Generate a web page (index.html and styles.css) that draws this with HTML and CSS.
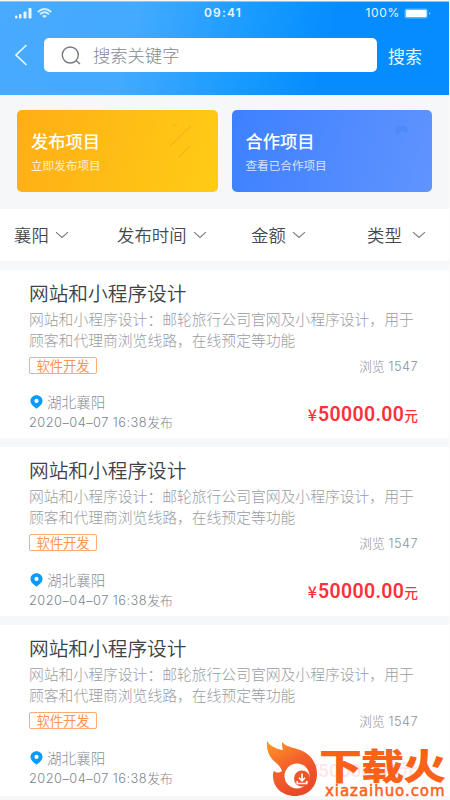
FILE: index.html
```
<!DOCTYPE html>
<html lang="zh-CN">
<head>
<meta charset="utf-8">
<title>项目列表</title>
<link rel="stylesheet" href="styles.css">
</head>
<body>
<svg width="0" height="0" class="defs">
  <symbol id="chevron" viewBox="0 0 14 8"><path d="M1 1.2 7 6.5 13 1.2" fill="none" stroke="#777b83" stroke-width="1.1"/></symbol>
  <symbol id="pin" viewBox="0 0 13 14"><path fill-rule="evenodd" d="M6.5 .3C3 .3.5 2.8.5 6c0 3.3 3 5.200 6 7.800 3-2.600 6-4.500 6-7.800C12.500 2.800 10 .3 6.500 .3ZM6.500 3.800a2.100 2.100 0 1 1 0 4.200 2.100 2.100 0 0 1 0-4.200Z" fill="#079bff"/></symbol>
</svg>
<div class="screen">
  <header class="header">
    <div class="status">
      <div class="signals">
        <svg width="17" height="11" viewBox="0 0 17 11" fill="#e6f5ff"><rect y="7.500" width="2.500" height="3" rx="1"/><rect x="4" y="6" width="2.500" height="4.500" rx=".8"/><rect x="8.500" y="3.500" width="3" height="7" rx=".8"/><rect x="13.500" y="0" width="3" height="10.500" rx=".8"/></svg>
        <svg width="15" height="11" viewBox="0 0 15 11" fill="none" stroke="#d3edff" stroke-width="1.800"><path d="M.8 4Q7.500-2 14.200 4M3 6.200q4.500-3.800 9 0"/><path d="M5 8q2.500-2 5 0L7.500 10Z" fill="#d3edff" stroke="none"/></svg>
      </div>
      <span class="time">09:41</span>
      <div class="power"><span>100%</span><svg width="27" height="11" viewBox="0 0 27 11"><rect x=".5" y=".5" width="23" height="10" rx="2" fill="#5db6ff"/><rect x="2" y="2" width="20.500" height="7" rx="1" fill="#fff"/><path d="M25 4v3l1.500-1.500Z" fill="#8accff"/></svg></div>
    </div>
    <div class="searchbar">
      <svg class="back" width="14" height="22" viewBox="0 0 14 22"><path d="M12.500 1 2 11l10.500 10" fill="none" stroke="#e6f5ff" stroke-width="1.700"/></svg>
      <div class="field">
        <svg width="20" height="19" viewBox="0 0 20 19" fill="none" stroke="#757985" stroke-width="1.400"><circle cx="9.300" cy="9" r="8"/><path d="m15 14.500 4 3.500"/></svg>
        <span>搜索关键字</span>
      </div>
      <span class="submit">搜索</span>
    </div>
  </header>

  <section class="actions">
    <div class="action publish">
      <h3>发布项目</h3><p>立即发布项目</p>
      <svg class="deco" width="28" height="38" viewBox="0 0 28 38"><path d="m2 23 21-20M11 34l11-11M4 2h5" fill="none" stroke="#e9a914" stroke-width="1.200" opacity=".55"/></svg>
    </div>
    <div class="action cooperate">
      <h3>合作项目</h3><p>查看已合作项目</p>
      <svg class="deco" width="28" height="38" viewBox="0 0 28 38"><path d="M1 8 5 3h7l4 4-3 3-4-3-4 5Z" fill="#3f82ee" opacity=".4"/></svg>
    </div>
  </section>

  <nav class="filters">
    <div class="filter">襄阳<svg width="14" height="8"><use href="#chevron"/></svg></div>
    <div class="filter">发布时间<svg width="14" height="8"><use href="#chevron"/></svg></div>
    <div class="filter">金额<svg width="14" height="8"><use href="#chevron"/></svg></div>
    <div class="filter last">类型<svg width="14" height="8"><use href="#chevron"/></svg></div>
  </nav>

  <main class="list">
    <article class="item">
      <h2>网站和小程序设计</h2>
      <p class="desc">网站和小程序设计：邮轮旅行公司官网及小程序设计，用于<br>顾客和代理商浏览线路，在线预定等功能</p>
      <div class="meta"><span class="tag">软件开发</span><span class="views">浏览 <b>1547</b></span></div>
      <div class="bottom">
        <div><div class="place"><svg width="13" height="14"><use href="#pin"/></svg>湖北襄阳</div><div class="date"><b>2020–04–07 16:38</b>发布</div></div>
        <div class="price"><i>¥</i><b>50000.00</b><em>元</em></div>
      </div>
    </article>
    <article class="item">
      <h2>网站和小程序设计</h2>
      <p class="desc">网站和小程序设计：邮轮旅行公司官网及小程序设计，用于<br>顾客和代理商浏览线路，在线预定等功能</p>
      <div class="meta"><span class="tag">软件开发</span><span class="views">浏览 <b>1547</b></span></div>
      <div class="bottom">
        <div><div class="place"><svg width="13" height="14"><use href="#pin"/></svg>湖北襄阳</div><div class="date"><b>2020–04–07 16:38</b>发布</div></div>
        <div class="price"><i>¥</i><b>50000.00</b><em>元</em></div>
      </div>
    </article>
    <article class="item">
      <h2>网站和小程序设计</h2>
      <p class="desc">网站和小程序设计：邮轮旅行公司官网及小程序设计，用于<br>顾客和代理商浏览线路，在线预定等功能</p>
      <div class="meta"><span class="tag">软件开发</span><span class="views">浏览 <b>1547</b></span></div>
      <div class="bottom">
        <div><div class="place"><svg width="13" height="14"><use href="#pin"/></svg>湖北襄阳</div><div class="date"><b>2020–04–07 16:38</b>发布</div></div>
      </div>
    </article>
  </main>

  <div class="watermark">
    <svg width="53" height="58" viewBox="0 0 53 58">
      <defs><linearGradient id="flame" x1="0" y1="0" x2=".5" y2="1"><stop offset="0" stop-color="#ff9b25"/><stop offset=".5" stop-color="#f4632a"/><stop offset="1" stop-color="#e94a28"/></linearGradient></defs>
      <path d="M1 0C4 5 10 8 17 9c-1-3-1-5-1-8 3 4 9 5 15 7 12 3 20 13 20 25 0 13-9 22-22 22C16 55 7 46 7 35c0-2 0-4 1-5 3 2 5 2 8 0-1-3-3-6-7-9C3 16 0 8 1 0Z" fill="url(#flame)"/>
      <circle cx="31" cy="35" r="12.500" fill="#fff"/><circle cx="36" cy="37.500" r="8" fill="#ef5629"/>
      <path d="M36 32.500v7m-3-2.700 3 3 3-3M31.200 40v2.500h9.500V40" fill="none" stroke="#fff" stroke-width="1.600"/>
    </svg>
    <div class="brand">
      <div class="brand-name">下载火</div>
      <div class="brand-url">xiazaihuo.com</div>
    </div>
    <div class="ghost">¥50000.00元</div>
  </div>
</div>
</body>
</html>
```
FILE: styles.css
```
* { box-sizing: border-box; }
body, h2, h3, p { margin: 0; }
body {
  width: 450px;
  height: 800px;
  overflow: hidden;
  background: #fafafb;
  font-family: "Noto Sans CJK SC", sans-serif;
  font-weight: 300;
}
b, i, em { font-weight: inherit; font-style: normal; }
svg { display: block; flex: none; }
.defs { position: absolute; }
.screen {
  position: relative;
  width: 449px;
  height: 800px;
  padding-top: 1px;
  overflow: hidden;
  background: #f5f7f8;
}
.header {
  height: 94px;
  border-top: 1px solid #8bc4ef;
  background: linear-gradient(105deg, #49aaff 0%, #42aaff 30%, #169aff 56%, #058dff 72%, #058dff 100%);
  color: #e8f5ff;
}
.status {
  display: grid;
  grid-template-columns: 1fr auto 1fr;
  align-items: center;
  height: 22px;
  padding: 0 18px 0 15px;
}
.signals { display: flex; gap: 5px; }
.time { font: 600 12px/22px Inter, sans-serif; letter-spacing: 1.2px; }
.power {
  display: flex;
  justify-content: flex-end;
  align-items: center;
  gap: 4px;
  font: 400 12px/22px Inter, sans-serif;
  letter-spacing: .7px;
}
.searchbar { display: flex; align-items: center; height: 34px; margin-top: 14px; padding-left: 14px; }
.field {
  display: flex;
  align-items: center;
  gap: 12px;
  width: 333px;
  height: 34px;
  margin-left: 16px;
  padding-left: 17px;
  border-radius: 5px;
  background: #fff;
  color: #858991;
  font-size: 17.300px;
}
.submit { margin-left: 11px; font-size: 17px; font-weight: 400; }
.field span { padding-bottom: 1px; }
.actions { display: flex; gap: 14px; height: 114px; padding: 15px 17px 17px; }
.action { position: relative; width: 201px; height: 82px; padding: 19px 14px; border-radius: 5px; color: #fff; }
.publish { background: linear-gradient(105deg, #ffae15, #ffcc15); }
.cooperate { background: linear-gradient(105deg, #3d80ff, #6094ff); }
.action h3 { font-size: 17.300px; line-height: 24px; font-weight: 500; }
.action p { margin-top: 3px; font-size: 11.600px; line-height: 18px; font-weight: 400; opacity: .78; }
.deco { position: absolute; left: 151px; top: 13px; }
.cooperate .deco { left: 161px; }
.filters {
  display: grid;
  grid-template-columns: 103px 134px 116px auto;
  height: 52px;
  padding: 0 0 1px 14px;
  background: #fff;
}
.filter { display: flex; align-items: center; gap: 6px; color: #454850; font-size: 17.400px; font-weight: 350; }
.last { gap: 10px; }
.list { display: grid; grid-template-rows: 168px 169px 171px; gap: 9px; margin-top: 9px; }
.item { padding: 9px 31px 0 29px; background: #fff; }
.item h2 { height: 28px; color: #3d4148; font-size: 19.700px; line-height: 28px; font-weight: 350; white-space: nowrap; }
.desc { margin-top: 1px; color: #999da4; font-size: 14.800px; line-height: 21px; white-space: nowrap; }
.meta { display: flex; align-items: flex-start; justify-content: space-between; height: 35px; margin-top: 7px; }
.item:first-child .meta { height: 34px; }
.item:first-child .price { margin-top: 11px; }
.tag {
  width: 68px;
  height: 17px;
  border: 1px solid #ffab73;
  border-radius: 2px;
  color: #ff944f;
  font-size: 13.300px;
  line-height: 15px;
  font-weight: 400;
  text-align: center;
}
.views { color: #8e929a; font-size: 12.700px; line-height: 18px; }
.views b { font: 300 12.700px/18px Inter, sans-serif; letter-spacing: .5px; margin-left: 1px; }
.bottom { display: flex; justify-content: space-between; }
.place { display: flex; align-items: center; gap: 4px; height: 20px; margin-left: 1px; color: #898e96; font-size: 14.600px; }
.place svg { margin-top: 2px; }
.date { color: #81868e; font-size: 12.800px; line-height: 21px; white-space: nowrap; }
.date b { font: 300 12.800px/21px Inter, sans-serif; letter-spacing: .47px; }
.price { display: flex; align-items: baseline; height: 24px; margin-top: 10px; color: #ff3039; font-weight: 500; line-height: 24px; }
.price i { margin-right: 1px; font-size: 16px; }
.price b { font: 600 19.500px/24px Roboto, sans-serif; letter-spacing: .35px; }
.price em { font-size: 13.700px; }
.watermark { position: absolute; left: 266px; top: 741px; display: flex; }
.brand { width: 130px; color: #fb6219; }
.brand-name { height: 42px; font-size: 43px; line-height: 49px; font-weight: 900; letter-spacing: -1px; white-space: nowrap; transform: scaleY(.84); transform-origin: 0 50%; }
.brand-url { padding-left: 6px; font: 400 15px/16px "DejaVu Sans", sans-serif; -webkit-text-stroke: .5px #fb6219; letter-spacing: .95px; white-space: nowrap; }
.ghost { position: absolute; left: 42px; top: 18px; color: #ff3039; font: 500 19px/24px Roboto, "Noto Sans CJK SC", sans-serif; opacity: .12; }
```
